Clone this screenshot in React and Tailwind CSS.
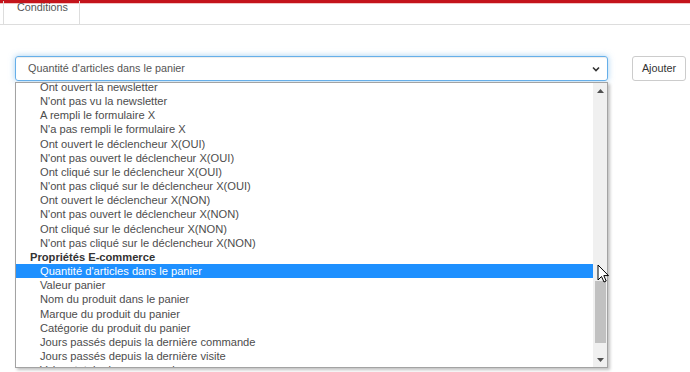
import React from 'react';

const groupA = [
  'Ont ouvert la newsletter',
  "N'ont pas vu la newsletter",
  'A rempli le formulaire X',
  "N'a pas rempli le formulaire X",
  'Ont ouvert le déclencheur X(OUI)',
  "N'ont pas ouvert le déclencheur X(OUI)",
  'Ont cliqué sur le déclencheur X(OUI)',
  "N'ont pas cliqué sur le déclencheur X(OUI)",
  'Ont ouvert le déclencheur X(NON)',
  "N'ont pas ouvert le déclencheur X(NON)",
  'Ont cliqué sur le déclencheur X(NON)',
  "N'ont pas cliqué sur le déclencheur X(NON)",
];

const groupB = [
  "Quantité d'articles dans le panier",
  'Valeur panier',
  'Nom du produit dans le panier',
  'Marque du produit du panier',
  'Catégorie du produit du panier',
  'Jours passés depuis la dernière commande',
  'Jours passés depuis la dernière visite',
  'Valeur totale des commandes',
];

const selected = "Quantité d'articles dans le panier";

function Option({ label }) {
  const active = label === selected;
  return (
    <div
      className={`h-[14.17px] leading-[14.17px] pl-[24px] whitespace-nowrap ${
        active ? 'bg-[#1e90ff] text-white' : 'text-[#4d4d4d]'
      }`}
    >
      {label}
    </div>
  );
}

export default function App() {
  return (
    <div className="w-[690px] h-[372px] bg-white relative overflow-hidden font-['Liberation_Sans',Arial,sans-serif]">
      {/* top bar + tabs */}
      <div className="h-[3px] bg-[#c4141b]" />
      <div className="h-[1px] bg-[#f2c4c4]" />
      <div className="h-[21px] border-b border-[#dddddd] flex">
        <div className="ml-[3px] w-[77px] border-x border-[#dddddd] pl-[13px] text-[10.8px] leading-[12px] text-[#555] -mt-[3px]">
          Conditions
        </div>
      </div>

      {/* select row */}
      <div className="flex items-start pt-[31px] pl-[15px]">
        <div className="w-[593px] h-[25px] rounded-[3px] border border-[#66afe9] shadow-[inset_0_1px_1px_rgba(0,0,0,0.075),0_0_6px_rgba(102,175,233,0.6)] flex items-center justify-between pl-[12px] pr-[7px] text-[10.8px] text-[#555]">
          <span>Quantité d'articles dans le panier</span>
          <svg width="8" height="6" viewBox="0 0 8 6">
            <polyline points="1,1.5 4,4.5 7,1.5" fill="none" stroke="#333" strokeWidth="1.6" />
          </svg>
        </div>
        <button className="ml-[24px] w-[54px] h-[25px] rounded-[3px] border border-[#cccccc] bg-white text-[10.8px] text-[#333]">
          Ajouter
        </button>
      </div>

      {/* open dropdown list */}
      <div className="absolute left-[15px] top-[82px] w-[593px] h-[286px] border border-[#a3a3a3] bg-white shadow-[2px_2px_3px_rgba(0,0,0,0.25)] flex overflow-hidden">
        <div className="flex-1 overflow-hidden text-[11.15px]">
          <div className="-mt-[3px]">
            {groupA.map((o) => (
              <Option key={o} label={o} />
            ))}
            <div className="h-[14.17px] leading-[14.17px] pl-[14px] font-bold text-[#333] whitespace-nowrap">
              Propriétés E-commerce
            </div>
            {groupB.map((o) => (
              <Option key={o} label={o} />
            ))}
          </div>
        </div>
        {/* scrollbar */}
        <div className="w-[14px] bg-[#f0f0f0] flex flex-col">
          <div className="h-[15px] flex items-center justify-center">
            <svg width="7" height="4" viewBox="0 0 7 4">
              <polygon points="3.5,0 7,4 0,4" fill="#505050" />
            </svg>
          </div>
          <div className="mt-[183px] ml-[2px] mr-[1px] h-[62px] bg-[#c1c1c1]" />
          <div className="mt-auto h-[15px] flex items-center justify-center">
            <svg width="7" height="4" viewBox="0 0 7 4">
              <polygon points="0,0 7,0 3.5,4" fill="#505050" />
            </svg>
          </div>
        </div>
      </div>

      {/* mouse pointer */}
      <svg className="absolute left-[597px] top-[264px]" width="13" height="20" viewBox="0 0 13 20">
        <path
          d="M1 1 L1 16 L4.5 12.5 L7 18 L9.2 17 L6.8 11.6 L11.5 11.6 Z"
          fill="#fff"
          stroke="#000"
          strokeWidth="1"
          strokeLinejoin="round"
        />
      </svg>
    </div>
  );
}
